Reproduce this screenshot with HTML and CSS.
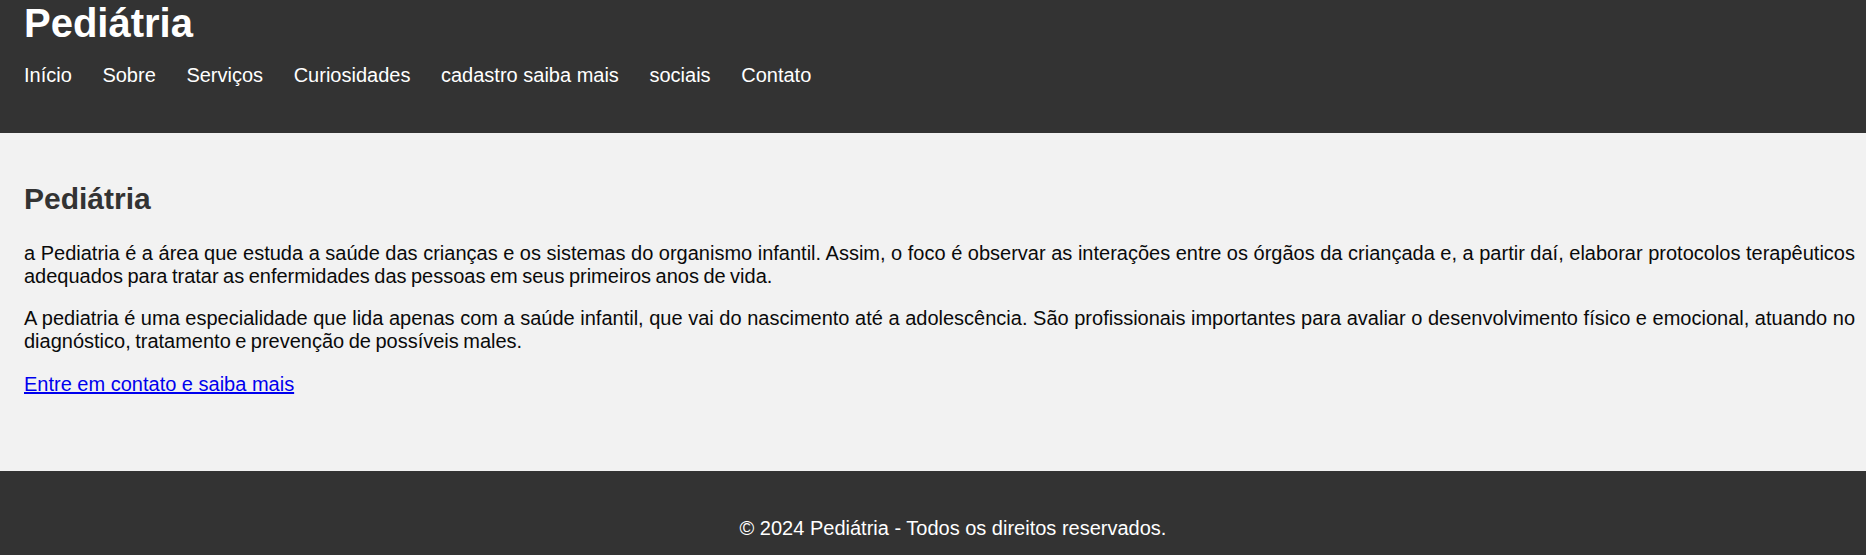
FILE: index.html
```html
<!DOCTYPE html>
<html lang="pt-BR">
<head>
<meta charset="utf-8">
<title>Pediátria</title>
<link rel="stylesheet" href="styles.css">
</head>
<body>
<header class="site-header">
  <h1 class="site-title">Pediátria</h1>
  <nav class="site-nav">
    <ul class="nav-list">
      <li><a href="#inicio">Início</a></li>
      <li><a href="#sobre">Sobre</a></li>
      <li><a href="#servicos">Serviços</a></li>
      <li><a href="#curiosidades">Curiosidades</a></li>
      <li><a href="#cadastro">cadastro saiba mais</a></li>
      <li><a href="#sociais">sociais</a></li>
      <li><a href="#contato">Contato</a></li>
    </ul>
  </nav>
</header>
<main class="content">
  <h2 class="section-title">Pediátria</h2>
  <p class="text">a Pediatria é a área que estuda a saúde das crianças e os sistemas do organismo infantil. Assim, o foco é observar as interações entre os órgãos da criançada e, a partir daí, elaborar protocolos terapêuticos adequados para tratar as enfermidades das pessoas em seus primeiros anos de vida.</p>
  <p class="text">A pediatria é uma especialidade que lida apenas com a saúde infantil, que vai do nascimento até a adolescência. São profissionais importantes para avaliar o desenvolvimento físico e emocional, atuando no diagnóstico, tratamento e prevenção de possíveis males.</p>
  <p class="text text-single"><a class="text-link" href="#contato">Entre em contato e saiba mais</a></p>
</main>
<footer class="site-footer">
  <p class="footer-text">© 2024 Pediátria - Todos os direitos reservados.</p>
</footer>
</body>
</html>
```

FILE: styles.css
```css
html, body {
  margin: 0;
  padding: 0;
}

body {
  background: #f2f2f2;
  font-family: "Liberation Sans", Arial, sans-serif;
  font-size: 20px;
  color: #0a0a0a;
}

.site-header {
  background: #333;
  color: #fff;
  padding: 0 24px;
}

.site-title {
  margin: 0;
  font-size: 40px;
  font-weight: bold;
  line-height: 46px;
}

.nav-list {
  list-style: none;
  margin: 18px 0 0;
  padding: 0 0 46px;
  display: flex;
  gap: 30.6px;
  line-height: 23px;
}

.nav-list a {
  color: #fff;
  text-decoration: none;
}

.content {
  padding: 24px 11px 56px 24px;
}

.section-title {
  margin: 24.7px 0 26px;
  font-size: 30px;
  font-weight: bold;
  line-height: 34.5px;
  color: #333;
}

.text {
  margin: 20px 0;
  line-height: 22.6px;
  text-align: justify;
  word-spacing: -1.1px;
}

.text-single {
  word-spacing: normal;
}

.section-title + .text {
  margin-top: 0;
}

.text-link {
  color: #0000ee;
  text-decoration: underline;
}

.site-footer {
  background: #333;
  color: #fff;
  text-align: center;
  padding: 26px 0 22px 40px;
}

.footer-text {
  margin: 20px 0;
  line-height: 23px;
}
```
